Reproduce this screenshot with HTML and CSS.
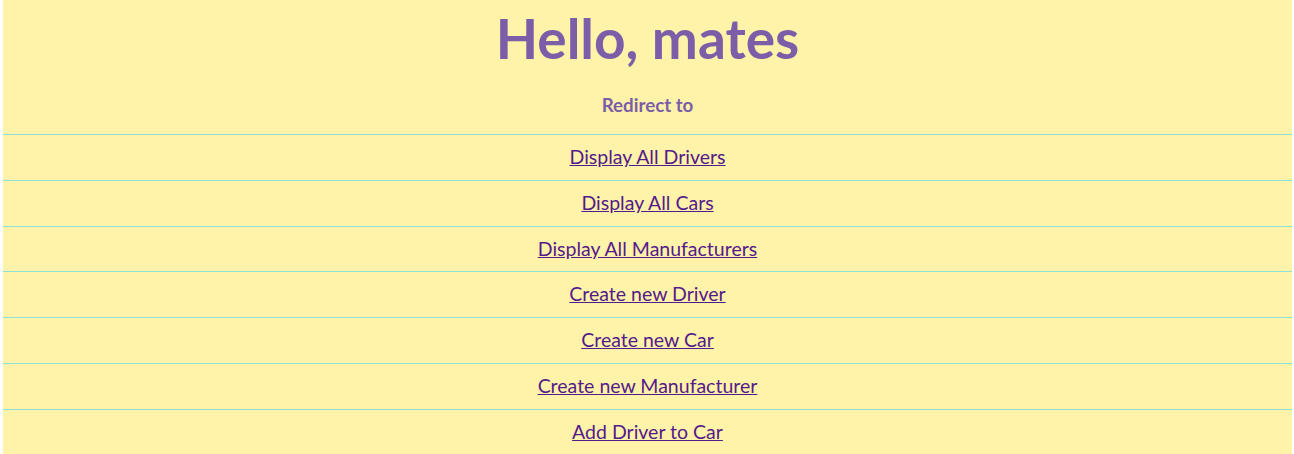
FILE: index.html
```html
<!DOCTYPE html>
<html>
<head>
<meta charset="utf-8">
<link rel="stylesheet" href="styles.css">
</head>
<body>
<div class="page">
  <h1 class="title">Hello, mates</h1>
  <h3 class="subtitle">Redirect to</h3>
  <ul class="links">
    <li class="row"><a class="link" href="#">Display All Drivers</a></li>
    <li class="row"><a class="link" href="#">Display All Cars</a></li>
    <li class="row"><a class="link" href="#">Display All Manufacturers</a></li>
    <li class="row"><a class="link" href="#">Create new Driver</a></li>
    <li class="row"><a class="link" href="#">Create new Car</a></li>
    <li class="row"><a class="link" href="#">Create new Manufacturer</a></li>
    <li class="row"><a class="link" href="#">Add Driver to Car</a></li>
  </ul>
</div>
</body>
</html>
```
FILE: styles.css
```css
html, body {
  margin: 0;
  padding: 0;
  background: #ffffff;
}
.page {
  margin: 0 2px 0 3px;
  min-height: 454px;
  background: #fef3a9;
  font-family: Lato, "DejaVu Sans", sans-serif;
  text-align: center;
}
.title {
  margin: 0;
  padding-top: 4px;
  font-size: 55px;
  line-height: 68px;
  font-weight: bold;
  color: #7b5ea7;
}
.subtitle {
  margin: 0;
  padding-top: 21px;
  height: 41px;
  line-height: 24px;
  font-size: 18.72px;
  font-weight: bold;
  color: #7b5ea7;
}
.links {
  list-style: none;
  margin: 0;
  padding: 0;
}
.row {
  border-top: 1px solid #8fe0d6;
  height: 44.83px;
  box-sizing: content-box;
  padding-bottom: 0;
  display: flex;
  align-items: center;
  justify-content: center;
}
.link {
  color: #551a8b;
  font-size: 19.5px;
  margin-bottom: 2px;
}
```
